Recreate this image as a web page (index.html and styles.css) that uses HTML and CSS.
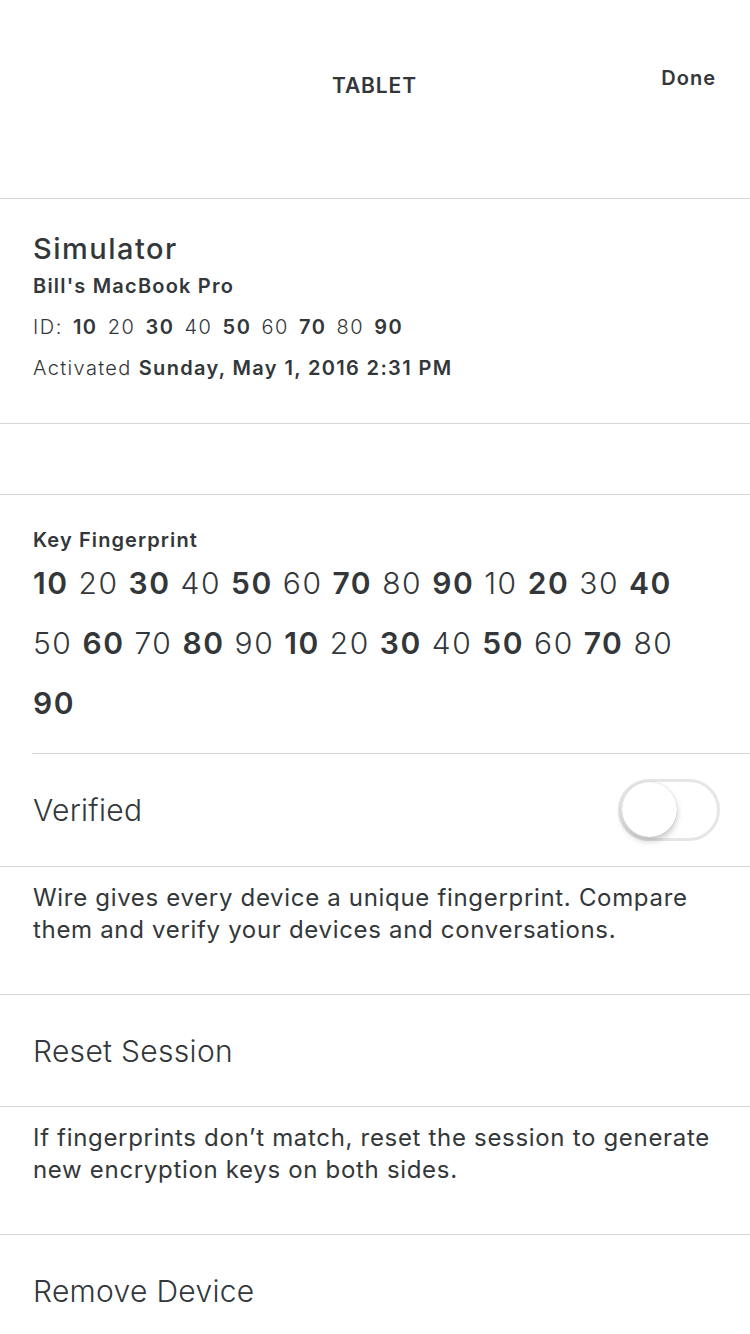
FILE: index.html
```html
<!DOCTYPE html>
<html>
<head>
<meta charset="utf-8">
<link rel="stylesheet" href="styles.css">
</head>
<body>
<div class="screen">
  <header class="nav">
    <div class="nav-side"></div>
    <div class="nav-title">TABLET</div>
    <div class="nav-side nav-done">Done</div>
  </header>

  <section class="device">
    <div class="device-name">Simulator</div>
    <div class="device-model">Bill's MacBook Pro</div>
    <div class="device-line device-id">ID: <b>10</b> 20 <b>30</b> 40 <b>50</b> 60 <b>70</b> 80 <b>90</b></div>
    <div class="device-line">Activated <b>Sunday, May 1, 2016 2:31 PM</b></div>
  </section>

  <div class="spacer"></div>

  <section class="fingerprint">
    <div class="fp-label">Key Fingerprint</div>
    <div class="fp-value"><b>10</b> 20 <b>30</b> 40 <b>50</b> 60 <b>70</b> 80 <b>90</b> 10 <b>20</b> 30 <b>40</b> 50 <b>60</b> 70 <b>80</b> 90 <b>10</b> 20 <b>30</b> 40 <b>50</b> 60 <b>70</b> 80 <b>90</b></div>
  </section>

  <div class="row row-toggle">
    <span class="row-label">Verified</span>
    <span class="switch"><span class="knob"></span></span>
  </div>

  <p class="note">Wire gives every device a unique fingerprint. Compare them and verify your devices and conversations.</p>

  <div class="row"><span class="row-label">Reset Session</span></div>

  <p class="note">If fingerprints don’t match, reset the session to generate new encryption keys on both sides.</p>

  <div class="row"><span class="row-label">Remove Device</span></div>
</div>
</body>
</html>
```

FILE: styles.css
```css
* { box-sizing: border-box; }
html, body {
  margin: 0;
  padding: 0;
  background: #ffffff;
}
body {
  font-family: "Inter", "Roboto", "Liberation Sans", sans-serif;
  color: #33373a;
}
.screen {
  width: 750px;
  height: 1334px;
  overflow: hidden;
}
.nav {
  height: 199px;
  border-bottom: 1px solid #d3d7d9;
  display: grid;
  grid-template-columns: 1fr auto 1fr;
  align-items: start;
  padding: 0 34px 0 33px;
}
.nav-title {
  padding-top: 73px;
  font-size: 21px;
  line-height: 26px;
  font-weight: 600;
  letter-spacing: 0.9px;
}
.nav-done {
  justify-self: end;
  padding-top: 66px;
  font-size: 20px;
  line-height: 24px;
  font-weight: 600;
  letter-spacing: 1px;
}
.device {
  padding: 32px 33px 34px;
  border-bottom: 1px solid #d3d7d9;
}
.device-name {
  font-size: 29px;
  line-height: 35px;
  font-weight: 500;
  letter-spacing: 1.5px;
}
.device-model {
  font-size: 20px;
  line-height: 41px;
  font-weight: 600;
  letter-spacing: 1.2px;
}
.device-line {
  font-size: 20px;
  line-height: 41px;
  font-weight: 300;
  letter-spacing: 1.35px;
}
.device-id {
  letter-spacing: 1.5px;
  word-spacing: 3px;
}
.device-line b { font-weight: 600; }
.spacer {
  height: 71px;
  border-bottom: 1px solid #d3d7d9;
}
.fingerprint {
  padding: 32px 40px 20px 33px;
}
.fp-label {
  font-size: 20px;
  line-height: 26px;
  font-weight: 600;
  letter-spacing: 1.1px;
}
.fp-value {
  font-size: 30px;
  line-height: 60px;
  font-weight: 300;
  letter-spacing: 1.55px;
}
.fp-value b { font-weight: 600; }
.row {
  height: 112px;
  border-top: 1px solid #d3d7d9;
  display: flex;
  align-items: center;
  justify-content: space-between;
  padding: 0 30px 0 33px;
}
.row-toggle {
  height: 113px;
  margin-left: 32px;
  padding-left: 1px;
}
.row-label {
  font-size: 30px;
  font-weight: 300;
  letter-spacing: 0.3px;
}
.note {
  margin: 0;
  padding: 15px 33px 48px;
  font-size: 24px;
  line-height: 32px;
  font-weight: 400;
  letter-spacing: 0.68px;
  border-top: 1px solid #d3d7d9;
}
.switch {
  width: 102px;
  height: 62px;
  border-radius: 31px;
  border: 3px solid #e6e6e6;
  background: #ffffff;
  position: relative;
}
.knob {
  position: absolute;
  left: 1px;
  top: 0px;
  width: 55px;
  height: 55px;
  border-radius: 50%;
  background: #ffffff;
  box-shadow: 0 4px 6px rgba(0,0,0,0.22), 0 0 1px rgba(0,0,0,0.25);
}
```
